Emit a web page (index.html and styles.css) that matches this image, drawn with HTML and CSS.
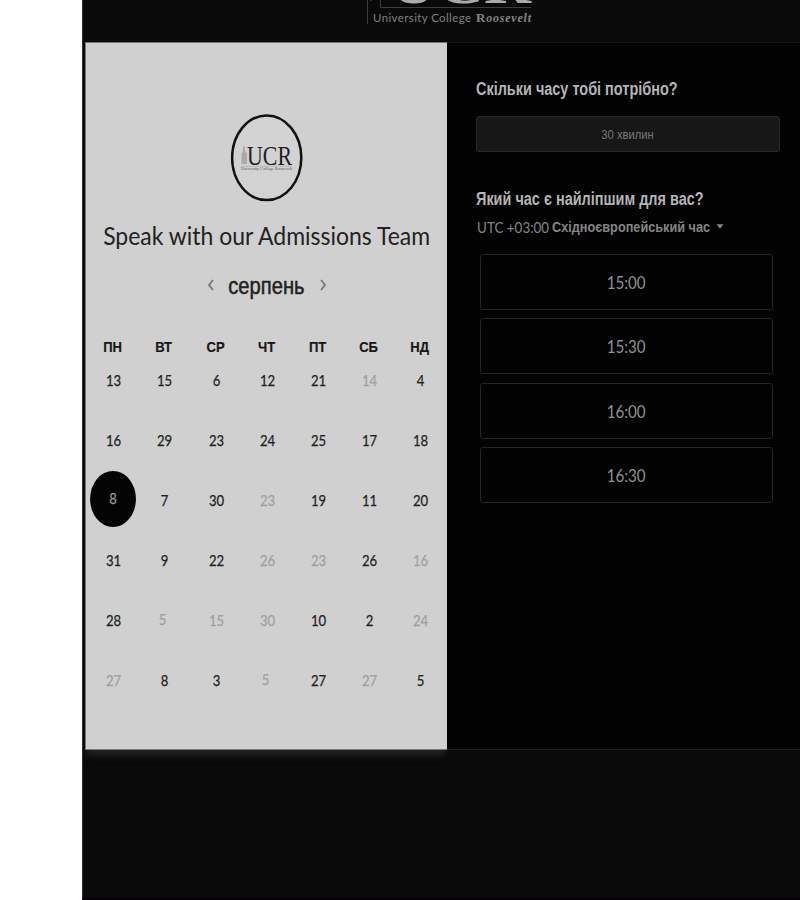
FILE: index.html
```
<!DOCTYPE html>
<html lang="uk">
<head>
<meta charset="utf-8">
<title>Speak with our Admissions Team</title>
<link rel="stylesheet" href="styles.css">
</head>
<body>
<div class="page">
  <header class="top">
    <svg class="brand" width="176" height="28" viewBox="0 0 176 28" role="img" aria-label="UCR">
      <path d="M7.5 0V24M20.5 0V7.5H171" fill="none" stroke="#3c3c3c"/>
      <path d="M11 0v1" stroke="#555"/>
      <text class="brand-big" x="30" y="3" textLength="141" lengthAdjust="spacingAndGlyphs">UCR</text>
      <text class="brand-name" x="13" y="21.5" textLength="98" lengthAdjust="spacing">University College</text>
      <text class="brand-script" x="116" y="21.5" textLength="55" lengthAdjust="spacing"><tspan class="initial">R</tspan>oosevelt</text>
    </svg>
  </header>
  <main class="card">
    <section class="calendar">
      <svg class="seal" width="72" height="88" viewBox="0 0 72 88" role="img" aria-label="UCR">
        <ellipse cx="35.7" cy="43.8" rx="34.6" ry="42.3" fill="#d2d2d2" stroke="#111" stroke-width="2.5"/>
        <path d="M10.5 50V39l1.5-1v-4l1-3 1 3v4l2 1v11z" fill="#aaa"/>
        <text class="seal-big" x="16" y="50.5" textLength="45" lengthAdjust="spacingAndGlyphs">UCR</text>
        <path d="M10 52.2H61" stroke="#aaa" stroke-width=".6"/>
        <text class="seal-small" x="10" y="56.3" textLength="51" lengthAdjust="spacingAndGlyphs">University College Roosevelt</text>
      </svg>
      <h1><span>Speak with our Admissions Team</span></h1>
      <div class="month">
        <svg width="8" height="12" viewBox="0 0 8 12"><path d="M6 1L2 6l4 5"/></svg>
        <h2><span>серпень</span></h2>
        <svg width="8" height="12" viewBox="0 0 8 12"><path d="M2 1l4 5-4 5"/></svg>
      </div>
      <div class="weekdays">
        <span>ПН</span><span>ВТ</span><span>СР</span><span>ЧТ</span><span>ПТ</span><span>СБ</span><span>НД</span>
      </div>
      <div class="days">
        <span>13</span><span>15</span><span>6</span><span>12</span><span>21</span><span class="off">14</span><span>4</span>
        <span>16</span><span>29</span><span>23</span><span>24</span><span>25</span><span>17</span><span>18</span>
        <span class="selected"><b>8</b></span><span>7</span><span>30</span><span class="off">23</span><span>19</span><span>11</span><span>20</span>
        <span>31</span><span>9</span><span>22</span><span class="off">26</span><span class="off">23</span><span>26</span><span class="off">16</span>
        <span>28</span><span class="off single">5</span><span class="off">15</span><span class="off">30</span><span>10</span><span>2</span><span class="off">24</span>
        <span class="off">27</span><span>8</span><span>3</span><span class="off single">5</span><span>27</span><span class="off">27</span><span>5</span>
      </div>
    </section>
    <section class="times">
      <h3 class="q1"><span>Скільки часу тобі потрібно?</span></h3>
      <div class="duration"><span>30 хвилин</span></div>
      <h3 class="q2"><span>Який час є найліпшим для вас?</span></h3>
      <div class="zone"><span class="utc">UTC +03:00</span><span class="zone-name">Східноєвропейський час</span><svg width="8" height="5" viewBox="0 0 8 5"><path d="M.5 .3h7L4 4.7z" fill="#858585"/></svg></div>
      <div class="slots">
        <div class="slot"><span>15:00</span></div>
        <div class="slot"><span>15:30</span></div>
        <div class="slot"><span>16:00</span></div>
        <div class="slot"><span>16:30</span></div>
      </div>
    </section>
  </main>
</div>
</body>
</html>
```
FILE: styles.css
```
* { box-sizing: border-box; }
body { margin: 0; background: #fff; font-family: Lato, "Liberation Sans", sans-serif; }
h1, h2, h3 { margin: 0; font-weight: 400; }
svg { display: block; flex: none; }
.page { height: 900px; margin-left: 82px; overflow: hidden; background: #0a0a0a; border-left: 1px solid #333; border-bottom: 3px solid #050306; }
.top { height: 42px; padding-left: 277px; }
.brand-big { font: 700 52px "Liberation Serif", serif; fill: #aaa; }
.brand-name { font: 400 11.5px Lato, sans-serif; fill: #808080; }
.brand-script { font: italic 700 12px "Liberation Serif", serif; fill: #858585; }
.initial { font-style: normal; font-size: 13px; }
.card { display: flex; height: 708px; margin-left: 2px; }
.calendar { width: 362px; background: #d0d0d0; border: 1px solid #777; border-right: 0; box-shadow: 0 5px 8px -1px #2a2a2a; clip-path: inset(0 0 -20px 0); display: flex; flex-direction: column; align-items: center; padding-top: 71px; }
.seal { margin-left: 1px; }
.times { flex: 1; min-width: 0; background: #020202; border-top: 1px solid #161616; border-bottom: 1px solid #1c1c1c; padding: 34px 20px 0 29px; }
.seal-big { font: 400 27px "Liberation Serif", serif; fill: #222; }
.seal-small { font: 400 3.6px "Liberation Serif", serif; fill: #555; }
h1 { width: 326px; display: flex; justify-content: center; height: 30px; margin-top: 18px; line-height: 30px; font-size: 25.5px; color: #222; white-space: nowrap; }
h1 span { transform: scaleX(.9); }
.month { display: flex; align-items: center; justify-content: space-between; width: 120px; height: 30px; margin-top: 20px; }
.month path { fill: none; stroke: #777; stroke-width: 1.8; }
h2 { width: 84px; display: flex; justify-content: center; font: 400 24px/30px "Liberation Sans", sans-serif; color: #222; -webkit-text-stroke: .5px #222; }
h2 span { transform: scaleX(.84) translateY(1px); }
.weekdays, .days { display: grid; grid-template-columns: repeat(7, 51.2px); width: 358.4px; text-align: center; }
.weekdays { margin-top: 36px; font: 700 15px/20px "Liberation Sans", sans-serif; color: #171717; -webkit-text-stroke: .2px #171717; }
.weekdays span { transform: scaleX(.87) translateY(.5px); }
.days { margin-top: 4px; margin-left: 2px; grid-auto-rows: 60px; font-size: 16px; line-height: 40px; color: #222; -webkit-text-stroke: .25px currentColor; }
.days span { transform: scaleX(.82); }
.days .off { color: #a0a0a0; }
.days .single { position: relative; left: -2px; top: -1px; }
.days .selected { height: 56px; line-height: 54px; margin: -9px -2px 0 -3px; border-radius: 50%; background: #030303; color: #999; }
.selected b { font-weight: 400; }
h3 { height: 24px; font: 700 17.5px/24px "Liberation Sans", sans-serif; color: #b5b5b5; white-space: nowrap; }
h3 span { display: inline-block; transform-origin: 0 50%; transform: scaleX(.826); }
.duration { margin-top: 15px; height: 36px; border: 1px solid #292929; border-radius: 3px; background: #171717; color: #777; display: flex; align-items: center; justify-content: center; font: 400 13.5px "Liberation Sans", sans-serif; }
.duration span { transform: scaleX(.83); }
.q2 { margin-top: 35px; }
.zone { height: 22px; margin-top: 4px; padding-left: 1px; display: flex; align-items: center; white-space: nowrap; color: #858585; }
.zone span { transform-origin: 0 50%; }
.utc { width: 75px; font-size: 16px; transform: scaleX(.84); }
.zone-name { width: 164px; font: 700 15.5px "Liberation Sans", sans-serif; transform: scaleX(.82) translateY(1px); }
.slots { display: grid; gap: 8.3px; grid-auto-rows: 56px; margin: 17px 7px 0 4px; }
.slot { border: 1px solid #252525; border-radius: 3px; display: flex; align-items: center; justify-content: center; font-size: 18px; color: #929292; }
.slot span { transform: scaleX(.84) translateY(-.5px); }
```
